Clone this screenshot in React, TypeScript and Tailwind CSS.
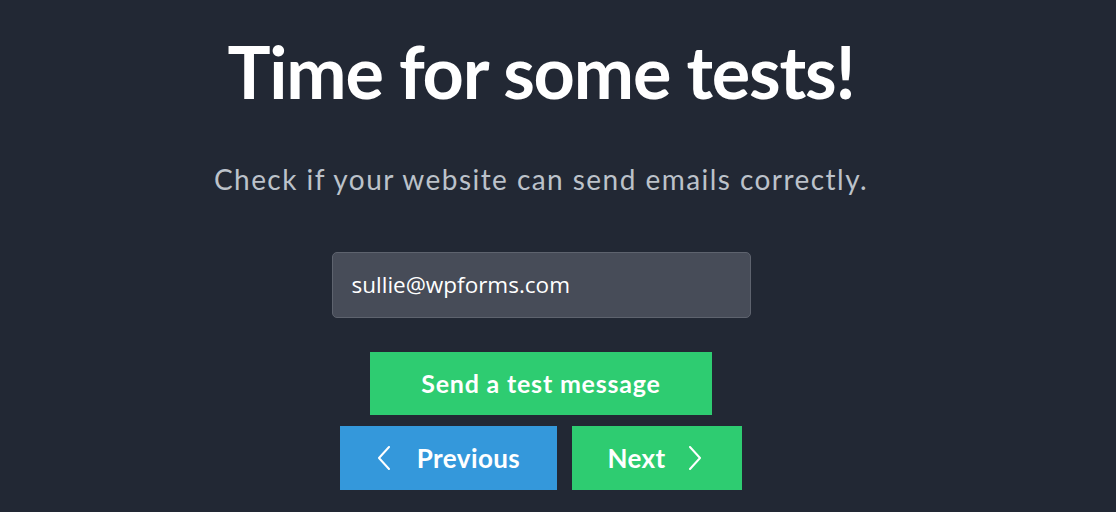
import React from "react";

function Chevron({ dir }: { dir: "left" | "right" }) {
  return (
    <svg width="14" height="24" viewBox="0 0 14 24" fill="none" stroke="white" strokeWidth="2" strokeLinecap="round" strokeLinejoin="round">
      {dir === "left" ? <path d="M12 1 L2 12 L12 23" /> : <path d="M2 1 L12 12 L2 23" />}
    </svg>
  );
}

export default function App() {
  return (
    <div className="w-[1116px] h-[512px] bg-[#222834] overflow-hidden" style={{ fontFamily: "Lato, 'Liberation Sans', sans-serif" }}>
      <div className="w-[1082px] flex flex-col items-center pt-[35px]">
        <h1 className="text-[72px] leading-none font-bold text-white tracking-[-1.2px]">Time for some tests!</h1>
        <p className="mt-[58px] text-[28px] leading-none text-[#bcc2ca] tracking-[1.45px]">Check if your website can send emails correctly.</p>

        <div className="mt-[59px] w-[419px] h-[66px] rounded-[5px] bg-[#474c58] border border-[#5e636e] flex items-center px-[19px]">
          <span className="text-[22.5px] text-white" style={{ fontFamily: "'Open Sans', 'Noto Sans', sans-serif" }}>sullie@wpforms.com</span>
        </div>

        <button className="mt-[34px] w-[342px] h-[63px] bg-[#2ecc71] text-white text-[25px] font-bold tracking-[0.8px] flex items-center justify-center">
          Send a test message
        </button>

        <div className="mt-[11px] flex gap-[15px]">
          <button className="w-[217px] h-[64px] bg-[#3498db] text-white text-[26px] font-bold tracking-[0.4px] flex items-center justify-center gap-[26px]">
            <Chevron dir="left" />
            <span>Previous</span>
          </button>
          <button className="w-[170px] h-[64px] bg-[#2ecc71] text-white text-[26px] font-bold tracking-[0.4px] flex items-center justify-center gap-[22px] pr-[5px]">
            <span>Next</span>
            <Chevron dir="right" />
          </button>
        </div>
      </div>
    </div>
  );
}
